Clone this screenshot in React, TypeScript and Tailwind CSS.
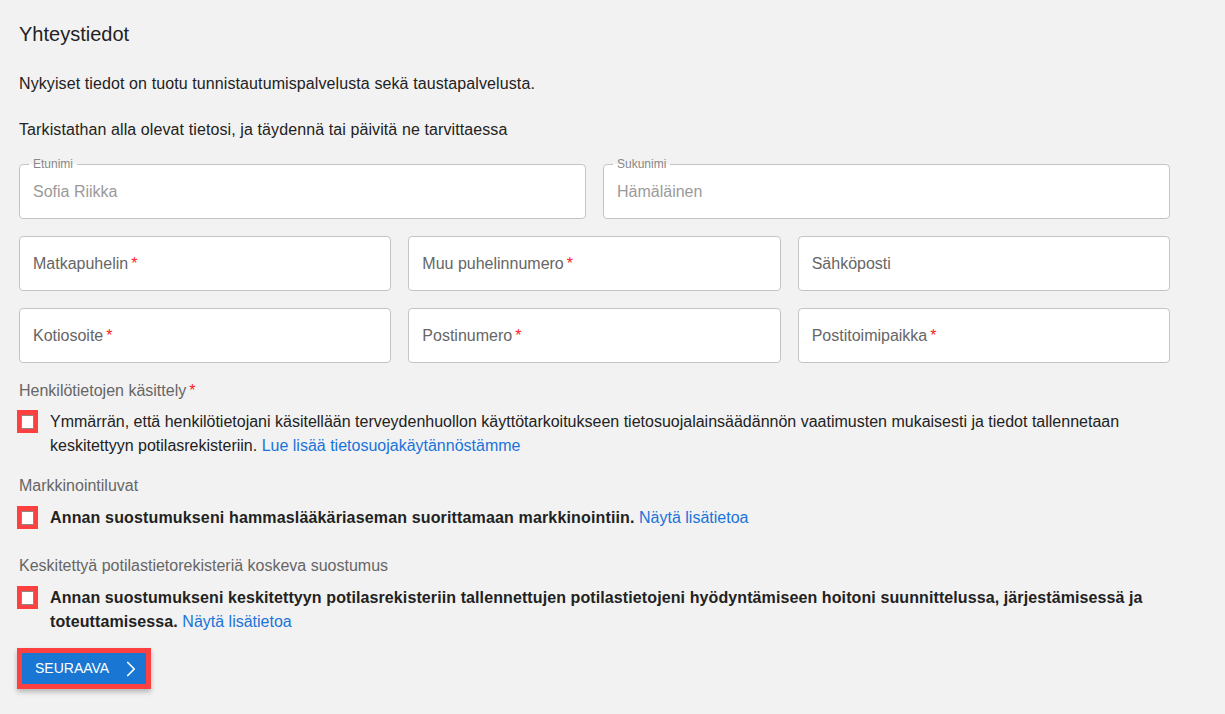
import { ChevronRight } from "lucide-react";

const Req = () => <span className="text-[#ff1a1a] ml-[3px]">*</span>;

const FilledField = ({ label, value }: { label: string; value: string }) => (
    <div className="relative h-[55px] bg-white border border-[#c4c4c4] rounded-[4px] px-[13px] flex items-center">
        <span className="absolute -top-[8px] left-[9px] px-[4px] text-[12px] leading-[14px] text-[#888] bg-[linear-gradient(to_bottom,#f2f2f2_50%,#ffffff_50%)]">
            {label}
        </span>
        <span className="text-[16px] text-[#9a9a9a]">{value}</span>
    </div>
);

const EmptyField = ({ label, required }: { label: string; required?: boolean }) => (
    <div className="h-[55px] bg-white border border-[#c4c4c4] rounded-[4px] px-[13px] flex items-center">
        <span className="text-[16px] text-[#666]">
            {label}
            {required && <Req />}
        </span>
    </div>
);

const Check = () => (
    <div className="shrink-0 ml-[-2px] w-[21px] h-[23px] bg-[#ff4040] flex items-center justify-center">
        <div className="w-[13px] h-[14px] bg-white border border-[#8a8a8a]" />
    </div>
);

export default function App() {
    return (
        <div className="min-h-[714px] bg-[#f2f2f2] font-['Liberation_Sans',Arial,sans-serif] text-[#222] pl-[19px] pr-[55px] pt-[21px]">
            <h1 className="text-[20px] leading-[26px] text-[#222]">Yhteystiedot</h1>
            <p className="text-[16px] leading-[24px] mt-[25px] tracking-[0.1px]">
                Nykyiset tiedot on tuotu tunnistautumispalvelusta sekä taustapalvelusta.
            </p>
            <p className="text-[16px] leading-[24px] mt-[22px] tracking-[0.1px]">
                Tarkistathan alla olevat tietosi, ja täydennä tai päivitä ne tarvittaessa
            </p>

            <div className="mt-[22px] flex flex-col gap-[17px]">
                <div className="grid grid-cols-2 gap-[17px]">
                    <FilledField label="Etunimi" value="Sofia Riikka" />
                    <FilledField label="Sukunimi" value="Hämäläinen" />
                </div>
                <div className="grid grid-cols-3 gap-[17px]">
                    <EmptyField label="Matkapuhelin" required />
                    <EmptyField label="Muu puhelinnumero" required />
                    <EmptyField label="Sähköposti" />
                </div>
                <div className="grid grid-cols-3 gap-[17px]">
                    <EmptyField label="Kotiosoite" required />
                    <EmptyField label="Postinumero" required />
                    <EmptyField label="Postitoimipaikka" required />
                </div>
            </div>

            <div className="mt-[16px] text-[16px] leading-[24px] text-[#666]">
                Henkilötietojen käsittely
                <Req />
            </div>
            <div className="mt-[7px] flex gap-[12px]">
                <Check />
                <p className="text-[16px] leading-[24px] text-[#222]">
                    Ymmärrän, että henkilötietojani käsitellään terveydenhuollon käyttötarkoitukseen tietosuojalainsäädännön
                    vaatimusten mukaisesti ja tiedot tallennetaan keskitettyyn potilasrekisteriin.{" "}
                    <a className="text-[#1a73d9]">Lue lisää tietosuojakäytännöstämme</a>
                </p>
            </div>

            <div className="mt-[16px] text-[16px] leading-[24px] text-[#666]">Markkinointiluvat</div>
            <div className="mt-[8px] flex gap-[12px]">
                <Check />
                <p className="text-[16px] leading-[24px] text-[#222]">
                    <b className="tracking-[0.15px]">Annan suostumukseni hammaslääkäriaseman suorittamaan markkinointiin.</b>{" "}
                    <a className="text-[#1a73d9]">Näytä lisätietoa</a>
                </p>
            </div>

            <div className="mt-[24px] text-[16px] leading-[24px] text-[#666]">
                Keskitettyä potilastietorekisteriä koskeva suostumus
            </div>
            <div className="mt-[8px] flex gap-[12px]">
                <Check />
                <p className="text-[16px] leading-[24px] text-[#222]">
                    <b className="tracking-[0.1px]">
                        Annan suostumukseni keskitettyyn potilasrekisteriin tallennettujen potilastietojeni hyödyntämiseen
                        hoitoni suunnittelussa, järjestämisessä ja toteuttamisessa.
                    </b>{" "}
                    <a className="text-[#1a73d9]">Näytä lisätietoa</a>
                </p>
            </div>

            <div className="mt-[14px] ml-[-2px] w-fit border-[5px] border-[#ff4040] shadow-[0_3px_5px_rgba(0,0,0,0.25)]">
                <button className="h-[31px] w-[124px] bg-[#1976d2] text-white text-[14px] flex items-center pl-[13px] gap-[9px]">
                    <span>SEURAAVA</span>
                    <ChevronRight className="w-[26px] h-[26px]" strokeWidth={1.6} />
                </button>
            </div>
        </div>
    );
}
